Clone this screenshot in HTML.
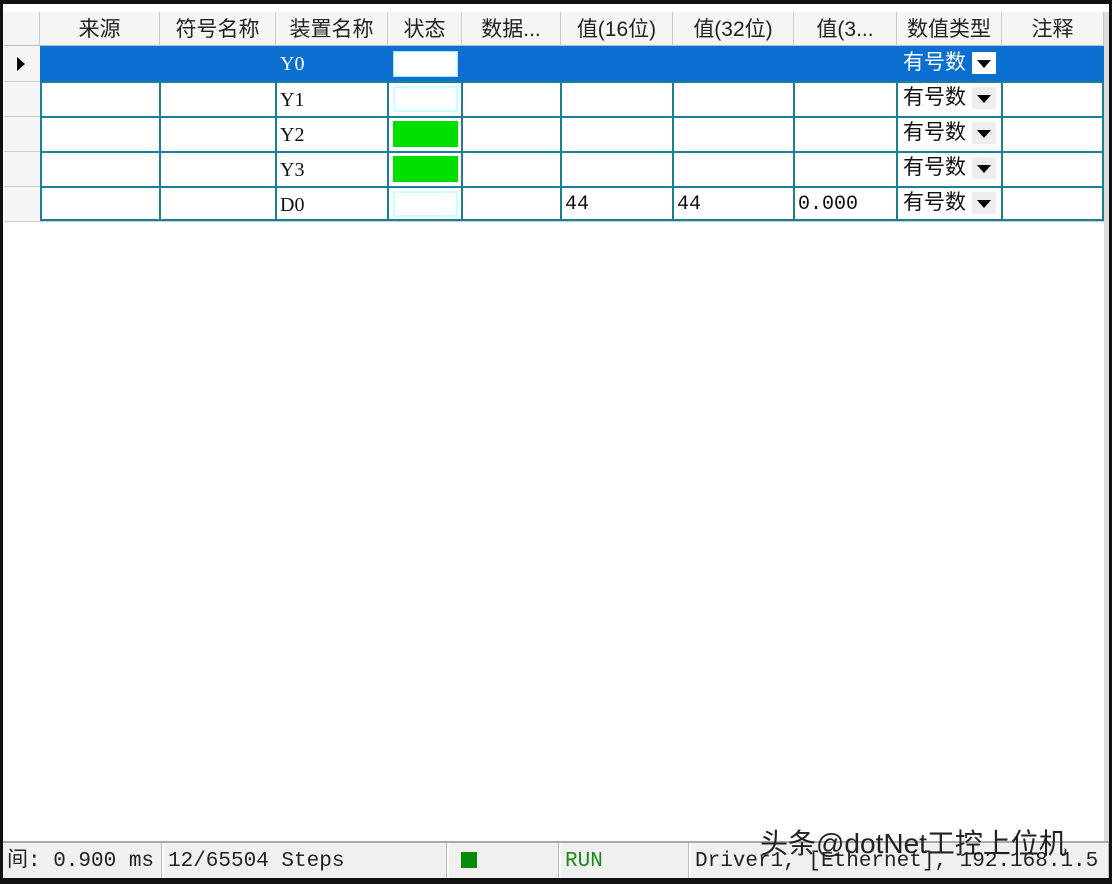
<!DOCTYPE html>
<html><head><meta charset="utf-8"><style>
*{box-sizing:border-box;margin:0;padding:0}
body{width:1112px;height:884px;background:#111;position:relative;overflow:hidden;font-family:"Liberation Serif","Noto Serif CJK SC",serif}
.win{position:absolute;left:3px;top:4px;width:1106px;height:874px;background:#fff}
.a{position:absolute}
.h{position:absolute;top:12px;height:34px;background:#f5f5f5;border-bottom:1px solid #bbb;font-family:"Liberation Sans","Noto Sans CJK SC",sans-serif;font-size:21px;color:#222;text-align:center;line-height:36px;border-right:1px solid #ccc}
.c{position:absolute;font-size:20px;line-height:36px;padding-left:4px;color:#111}
.gl{position:absolute;background:#1a7f9a}
.dd{position:absolute;width:24px;height:22px;background:#eee}
.dd:after{content:"";position:absolute;left:5px;top:8px;border-left:7px solid transparent;border-right:7px solid transparent;border-top:8px solid #000}
.sb{position:absolute;top:843px;height:35px;background:#f0f0f0;font-family:"Liberation Mono","Noto Sans CJK SC",monospace;font-size:21px;line-height:37px;border-right:1px solid #bbb;padding-left:4px;color:#222}
</style></head><body>
<div class="win"></div>
<div class="a" style="left:3px;top:12px;width:1106px;height:34px;background:#f5f5f5"></div>
<div class="h" style="left:4px;width:36px"></div>
<div class="h" style="left:40px;width:120px">来源</div>
<div class="h" style="left:160px;width:116px">符号名称</div>
<div class="h" style="left:276px;width:112px">装置名称</div>
<div class="h" style="left:388px;width:74px">状态</div>
<div class="h" style="left:462px;width:99px">数据...</div>
<div class="h" style="left:561px;width:112px">值(16位)</div>
<div class="h" style="left:673px;width:121px">值(32位)</div>
<div class="h" style="left:794px;width:103px">值(3...</div>
<div class="h" style="left:897px;width:105px">数值类型</div>
<div class="h" style="left:1002px;width:102px">注释</div>
<div class="a" style="left:1104px;top:12px;width:5px;height:830px;background:#ddd"></div>
<div class="a" style="left:4px;top:46px;width:36px;height:175px;background:#f5f5f5"></div>
<div class="a" style="left:4px;top:81px;width:36px;height:1px;background:#ccc"></div>
<div class="a" style="left:4px;top:116px;width:36px;height:1px;background:#ccc"></div>
<div class="a" style="left:4px;top:151px;width:36px;height:1px;background:#ccc"></div>
<div class="a" style="left:4px;top:186px;width:36px;height:1px;background:#ccc"></div>
<div class="a" style="left:4px;top:221px;width:1100px;height:1px;background:#ccc"></div>
<div class="a" style="left:17px;top:57px;border-top:7px solid transparent;border-bottom:7px solid transparent;border-left:8px solid #000"></div>
<div class="a" style="left:40px;top:46px;width:1064px;height:35px;background:#0a6fd0"></div>
<div class="gl" style="left:40px;top:81px;width:1064px;height:2px"></div>
<div class="gl" style="left:40px;top:116px;width:1064px;height:2px"></div>
<div class="gl" style="left:40px;top:151px;width:1064px;height:2px"></div>
<div class="gl" style="left:40px;top:186px;width:1064px;height:2px"></div>
<div class="gl" style="left:40px;top:219px;width:1064px;height:2px"></div>
<div class="gl" style="left:40px;top:81px;width:2px;height:140px"></div>
<div class="gl" style="left:159px;top:81px;width:2px;height:140px"></div>
<div class="gl" style="left:275px;top:81px;width:2px;height:140px"></div>
<div class="gl" style="left:387px;top:81px;width:2px;height:140px"></div>
<div class="gl" style="left:461px;top:81px;width:2px;height:140px"></div>
<div class="gl" style="left:560px;top:81px;width:2px;height:140px"></div>
<div class="gl" style="left:672px;top:81px;width:2px;height:140px"></div>
<div class="gl" style="left:793px;top:81px;width:2px;height:140px"></div>
<div class="gl" style="left:896px;top:81px;width:2px;height:140px"></div>
<div class="gl" style="left:1001px;top:81px;width:2px;height:140px"></div>
<div class="gl" style="left:1102px;top:81px;width:2px;height:140px"></div>
<div class="a" style="left:393px;top:51px;width:65px;height:26px;background:#fff;border:1px solid #9ee"></div>
<div class="a" style="left:393px;top:86px;width:65px;height:26px;background:#fff;border:2px solid #cff"></div>
<div class="a" style="left:393px;top:121px;width:65px;height:26px;background:#00e000"></div>
<div class="a" style="left:393px;top:156px;width:65px;height:26px;background:#00e000"></div>
<div class="a" style="left:393px;top:191px;width:65px;height:26px;background:#fff;border:2px solid #cff"></div>
<div class="c" style="left:276px;top:46px;color:#fff">Y0</div>
<div class="c" style="left:276px;top:82px">Y1</div>
<div class="c" style="left:276px;top:117px">Y2</div>
<div class="c" style="left:276px;top:152px">Y3</div>
<div class="c" style="left:276px;top:187px">D0</div>
<div class="c" style="left:561px;top:187px;font-family:'Liberation Mono',monospace">44</div>
<div class="c" style="left:673px;top:187px;font-family:'Liberation Mono',monospace">44</div>
<div class="c" style="left:794px;top:187px;font-family:'Liberation Mono',monospace">0.000</div>
<div class="c" style="left:899px;top:45px;color:#fff;font-family:'Liberation Sans','Noto Sans CJK SC',sans-serif;font-size:21px">有号数</div>
<div class="c" style="left:899px;top:80px;font-family:'Liberation Sans','Noto Sans CJK SC',sans-serif;font-size:21px">有号数</div>
<div class="c" style="left:899px;top:115px;font-family:'Liberation Sans','Noto Sans CJK SC',sans-serif;font-size:21px">有号数</div>
<div class="c" style="left:899px;top:150px;font-family:'Liberation Sans','Noto Sans CJK SC',sans-serif;font-size:21px">有号数</div>
<div class="c" style="left:899px;top:185px;font-family:'Liberation Sans','Noto Sans CJK SC',sans-serif;font-size:21px">有号数</div>
<div class="dd" style="left:972px;top:52px;background:#fff"></div>
<div class="dd" style="left:972px;top:87px"></div>
<div class="dd" style="left:972px;top:122px"></div>
<div class="dd" style="left:972px;top:157px"></div>
<div class="dd" style="left:972px;top:192px"></div>
<div class="a" style="left:3px;top:841px;width:1106px;height:2px;background:#aaa"></div>
<div class="sb" style="left:3px;width:159px">间: 0.900 ms</div>
<div class="sb" style="left:164px;width:283px">12/65504 Steps</div>
<div class="sb" style="left:449px;width:110px"><span style="display:inline-block;width:16px;height:16px;background:#0a8a0a;margin:9px 0 0 8px;vertical-align:top"></span></div>
<div class="sb" style="left:561px;width:128px;color:#1a8a1a">RUN</div>
<div class="sb" style="left:691px;width:418px">Driver1, [Ethernet], 192.168.1.5</div>
<div class="a" style="left:760px;top:822px;font-family:'Liberation Sans','Noto Sans CJK SC',sans-serif;font-size:28px;color:#222;line-height:44px">头条@dotNet工控上位机</div>
</body></html>
